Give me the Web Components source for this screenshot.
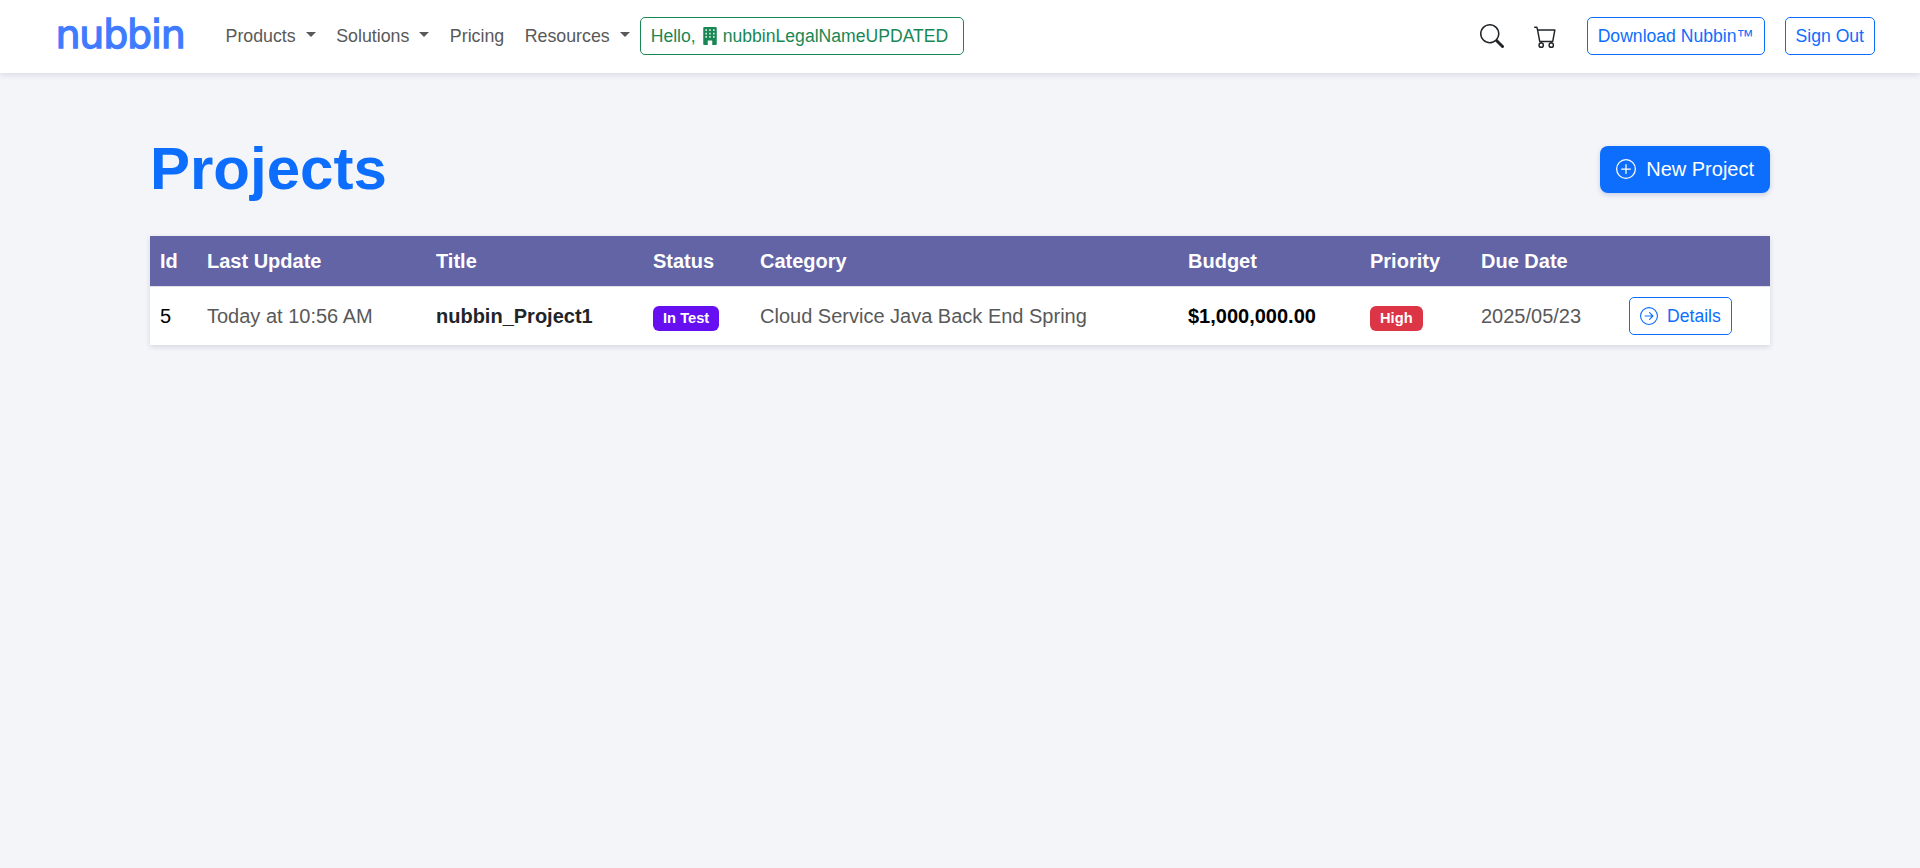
<!DOCTYPE html>
<html lang="en">
<head>
<meta charset="utf-8">
<title>Projects</title>
<style>
  html, body { margin: 0; height: 100%; }
  body {
    background: #f4f5f9;
    color: #212529;
    font-family: "Liberation Sans", Arial, sans-serif;
    font-size: 17.6px;
    line-height: 1.5;
  }
</style>
</head>
<body>
<app-navbar>
  <nav-link caret>Products</nav-link>
  <nav-link caret>Solutions</nav-link>
  <nav-link>Pricing</nav-link>
  <nav-link caret>Resources</nav-link>
  <hello-box slot="hello">nubbinLegalNameUPDATED</hello-box>
</app-navbar>
<projects-page></projects-page>

<script>
const icons = {
  search: '<path d="M11.742 10.344a6.5 6.5 0 1 0-1.397 1.398h-.001c.03.04.062.078.098.115l3.85 3.85a1 1 0 0 0 1.415-1.414l-3.85-3.85a1.007 1.007 0 0 0-.115-.1zM12 6.5a5.5 5.5 0 1 1-11 0 5.5 5.5 0 0 1 11 0z"/>',
  cart: '<path d="M0 1.5A.5.5 0 0 1 .5 1H2a.5.5 0 0 1 .485.379L2.89 3H14.5a.5.5 0 0 1 .491.592l-1.5 8A.5.5 0 0 1 13 12H4a.5.5 0 0 1-.491-.408L2.01 3.607 1.61 2H.5a.5.5 0 0 1-.5-.5zM3.102 4l1.313 7h8.17l1.313-7H3.102zM5 12a2 2 0 1 0 0 4 2 2 0 0 0 0-4zm7 0a2 2 0 1 0 0 4 2 2 0 0 0 0-4zm-7 1a1 1 0 1 1 0 2 1 1 0 0 1 0-2zm7 0a1 1 0 1 1 0 2 1 1 0 0 1 0-2z"/>',
  plus: '<path d="M8 15A7 7 0 1 1 8 1a7 7 0 0 1 0 14zm0 1A8 8 0 1 0 8 0a8 8 0 0 0 0 16z"/><path d="M8 4a.5.5 0 0 1 .5.5v3h3a.5.5 0 0 1 0 1h-3v3a.5.5 0 0 1-1 0v-3h-3a.5.5 0 0 1 0-1h3v-3A.5.5 0 0 1 8 4z"/>',
  arrow: '<path d="M1 8a7 7 0 1 0 14 0A7 7 0 0 0 1 8zm15 0A8 8 0 1 1 0 8a8 8 0 0 1 16 0zM4.5 7.5a.5.5 0 0 0 0 1h5.793l-2.147 2.146a.5.5 0 0 0 .708.708l3-3a.5.5 0 0 0 0-.708l-3-3a.5.5 0 1 0-.708.708L10.293 7.5H4.5z"/>',
  building: '<path fill-rule="evenodd" d="M3 0a1 1 0 0 0-1 1v14a1 1 0 0 0 1 1h3v-3.5a.5.5 0 0 1 .5-.5h3a.5.5 0 0 1 .5.5V16h3a1 1 0 0 0 1-1V1a1 1 0 0 0-1-1H3zM4 2h1.2v1.6H4zM7.4 2h1.2v1.6H7.4zM10.8 2H12v1.6h-1.2zM4 5h1.2v1.6H4zM7.4 5h1.2v1.6H7.4zM10.8 5H12v1.6h-1.2zM4 8h1.2v1.6H4zM7.4 8h1.2v1.6H7.4zM10.8 8H12v1.6h-1.2z"/>'
}

/**
 * Returns the svg markup for a named icon.
 *
 * @param {string} name - Key in the icons table.
 * @param {number} size - Width and height in pixels.
 * @returns {string} - The svg markup.
 */
const icon = (name, size) =>
  `<svg xmlns="http://www.w3.org/2000/svg" width="${size}" height="${size}" viewBox="0 0 16 16" fill="currentColor" aria-hidden="true">${icons[name]}</svg>`

customElements.define('nav-link', class extends HTMLElement {
  constructor () {
    super()
    this.attachShadow({ mode: 'open' }).innerHTML = `
      <style>
        :host { display: block; color: #595959; font-size: 17.8px; line-height: 26px; white-space: nowrap; }
        a { display: flex; align-items: center; }
        i { display: none; margin-left: 10px; margin-top: -3px; border-top: 5px solid currentColor; border-left: 5px solid transparent; border-right: 5px solid transparent; }
        :host([caret]) i { display: block; }
      </style>
      <a><slot></slot><i></i></a>`
  }
})

customElements.define('hello-box', class extends HTMLElement {
  constructor () {
    super()
    this.attachShadow({ mode: 'open' }).innerHTML = `
      <style>
        :host { display: flex; align-items: center; height: 38px; box-sizing: border-box; padding: 0 15px 0 10px; border: 1px solid #198754; border-radius: 5px; color: #198754; font-size: 17.6px; white-space: nowrap; }
        svg { margin: 0 4px 0 5px; }
      </style>
      Hello,${icon('building', 18)}<slot></slot>`
  }
})

customElements.define('outline-button', class extends HTMLElement {
  constructor () {
    super()
    const arrow = this.hasAttribute('arrow') ? icon('arrow', 18) : ''
    this.attachShadow({ mode: 'open' }).innerHTML = `
      <style>
        :host { display: inline-flex; align-items: center; gap: 9px; height: 38px; box-sizing: border-box; padding: 0 var(--pad, 10px); border: 1px solid #0d6efd; border-radius: 5px; color: #0d6efd; font-size: 17.6px; white-space: nowrap; }
      </style>
      ${arrow}<slot></slot>`
  }
})

customElements.define('status-badge', class extends HTMLElement {
  constructor () {
    super()
    this.attachShadow({ mode: 'open' }).innerHTML = `
      <style>
        :host { display: inline-block; padding: 5px 10px; border-radius: 6px; background: var(--badge, #6610f2); color: #fff; font-size: 14.7px; font-weight: 700; line-height: 15px; white-space: nowrap; }
      </style>
      <slot></slot>`
  }
})

customElements.define('app-navbar', class extends HTMLElement {
  constructor () {
    super()
    this.attachShadow({ mode: 'open' }).innerHTML = `
      <style>
        :host { display: flex; align-items: center; box-sizing: border-box; height: 73px; padding: 0 45px 1px 55.5px; background: #fff; box-shadow: 0 2px 6px rgba(60, 64, 110, .14); }
        .logo { color: #3f7bff; font-family: "DejaVu Sans", sans-serif; font-size: 39.5px; font-weight: 400; line-height: 46px; letter-spacing: -1.2px; -webkit-text-stroke: 1.3px #3f7bff; margin-right: 41px; margin-top: -4px; }
        nav { display: flex; align-items: center; gap: 20.5px; }
        .hello { margin-left: 10px; }
        .tools { display: flex; align-items: center; margin-left: auto; }
        .tools svg { display: block; color: #212529; }
        .search { margin-right: 30px; }
        .cart { margin-right: 30px; }
        .download { --pad: 9.4px; }
        .sign { margin-left: 20px; }
      </style>
      <div class="logo">nubbin</div>
      <nav><slot></slot></nav>
      <div class="hello"><slot name="hello"></slot></div>
      <div class="tools">
        <span class="search">${icon('search', 24)}</span>
        <span class="cart">${icon('cart', 23)}</span>
        <outline-button class="download">Download Nubbin™</outline-button>
        <outline-button class="sign">Sign Out</outline-button>
      </div>`
  }
})

customElements.define('projects-table', class extends HTMLElement {
  constructor () {
    super()
    this.attachShadow({ mode: 'open' }).innerHTML = `
      <style>
        :host { display: block; background: #fff; box-shadow: 0 2px 5px rgba(60, 64, 110, .16); font-size: 20px; }
        .row { display: grid; grid-template-columns: 47px 229px 217px 107px 428px 182px 111px 148px 1fr; align-items: center; }
        .head { height: 50px; background: #6364a6; color: #fff; font-weight: 700; border-bottom: 1px solid #dee2e6; }
        .body { height: 58px; }
        .row > * { padding: 0 10px; min-width: 0; white-space: nowrap; }
        .muted { color: #595959; }
        .strong { font-weight: 700; }
        .money { font-weight: 700; color: #000; }
        .id { color: #000; }
        .high { --badge: #dc3545; }
      </style>
      <div class="row head">
        <div>Id</div><div>Last Update</div><div>Title</div><div>Status</div><div>Category</div><div>Budget</div><div>Priority</div><div>Due Date</div><div></div>
      </div>
      <div class="row body">
        <div class="id">5</div>
        <div class="muted">Today at 10:56 AM</div>
        <div class="strong">nubbin_Project1</div>
        <div><status-badge>In Test</status-badge></div>
        <div class="muted">Cloud Service Java Back End Spring</div>
        <div class="money">$1,000,000.00</div>
        <div><status-badge class="high">High</status-badge></div>
        <div class="muted">2025/05/23</div>
        <div><outline-button arrow>Details</outline-button></div>
      </div>`
  }
})

customElements.define('projects-page', class extends HTMLElement {
  constructor () {
    super()
    this.attachShadow({ mode: 'open' }).innerHTML = `
      <style>
        :host { display: block; padding: 60px 150px 0; }
        header { display: flex; align-items: center; justify-content: space-between; margin-bottom: 31px; }
        h1 { margin: 0; color: #0d6efd; font-size: 60px; font-weight: 700; line-height: 72px; }
        .new { display: flex; align-items: center; gap: 10px; height: 47px; padding: 0 16px; border-radius: 8px; background: #0d6efd; color: #fff; font-size: 20px; box-shadow: 0 2px 5px rgba(13, 60, 140, .2); }
      </style>
      <header>
        <h1>Projects</h1>
        <div class="new">${icon('plus', 20)}New Project</div>
      </header>
      <projects-table></projects-table>`
  }
})
</script>
</body>
</html>
